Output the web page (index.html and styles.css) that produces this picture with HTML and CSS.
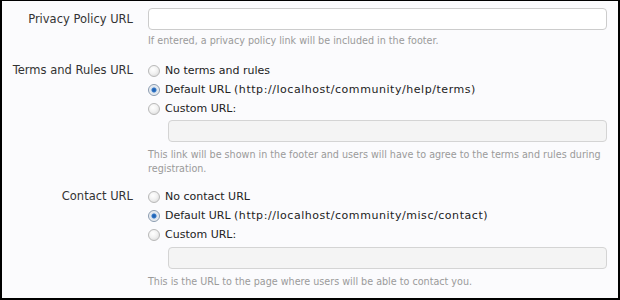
FILE: index.html
```html
<!DOCTYPE html>
<html>
<head>
<meta charset="utf-8">
<link rel="stylesheet" href="styles.css">
</head>
<body>
<div class="frame">
  <form class="options">
    <div class="row">
      <label class="label label-input">Privacy Policy URL</label>
      <div class="field">
        <input class="text" type="text">
        <p class="hint hint-first">If entered, a privacy policy link will be included in the footer.</p>
      </div>
    </div>
    <div class="row row-terms">
      <label class="label">Terms and Rules URL</label>
      <div class="field">
        <label class="choice"><input type="radio" name="terms"><span>No terms and rules</span></label>
        <label class="choice"><input type="radio" name="terms" checked><span>Default URL <span class="url">(http://localhost/community/help/terms)</span></span></label>
        <label class="choice"><input type="radio" name="terms"><span>Custom URL:</span></label>
        <div class="indent"><input class="text disabled" type="text" disabled></div>
        <p class="hint">This link will be shown in the footer and users will have to agree to the terms and rules during registration.</p>
      </div>
    </div>
    <div class="row row-contact">
      <label class="label">Contact URL</label>
      <div class="field">
        <label class="choice"><input type="radio" name="contact"><span>No contact URL</span></label>
        <label class="choice"><input type="radio" name="contact" checked><span>Default URL <span class="url">(http://localhost/community/misc/contact)</span></span></label>
        <label class="choice"><input type="radio" name="contact"><span>Custom URL:</span></label>
        <div class="indent indent-last"><input class="text disabled" type="text" disabled></div>
        <p class="hint">This is the URL to the page where users will be able to contact you.</p>
      </div>
    </div>
  </form>
</div>
</body>
</html>
```

FILE: styles.css
```css
html, body {
  margin: 0;
  padding: 0;
}
body {
  width: 620px;
  height: 300px;
  overflow: hidden;
  font-family: "DejaVu Sans", Verdana, sans-serif;
  font-size: 11px;
  color: #222;
}
.frame {
  box-sizing: border-box;
  width: 620px;
  height: 300px;
  border-style: solid;
  border-color: #000;
  border-width: 1px 2px 2px 2px;
  background: #fbfbfd;
  padding: 7px 11px 0 0;
}
.options {
  display: flex;
  flex-direction: column;
}
.row {
  display: grid;
  grid-template-columns: 131px 1fr;
  column-gap: 15px;
}
.row-terms {
  margin-top: 14px;
}
.row-contact {
  margin-top: 11px;
}
.label {
  text-align: right;
  color: #333;
  font-size: 11.5px;
  line-height: 19px;
}
.label-input {
  line-height: 22px;
}
.field {
  display: flex;
  flex-direction: column;
  min-width: 0;
}
.text {
  box-sizing: border-box;
  display: block;
  width: 100%;
  height: 22px;
  margin: 0;
  border: 1px solid #ccc;
  border-radius: 4px;
  background: #fff;
  font: inherit;
}
.text.disabled {
  background: #f4f4f4;
  border-color: #d4d4d4;
}
.choice {
  display: flex;
  align-items: center;
  height: 19px;
  white-space: nowrap;
}
.url {
  letter-spacing: 0.55px;
}
.choice input {
  -webkit-appearance: none;
  appearance: none;
  box-sizing: border-box;
  width: 12px;
  height: 12px;
  margin: 0 5px 0 0;
  border-radius: 50%;
  border: 1px solid #b8b8b8;
  background: radial-gradient(circle at 40% 35%, #ffffff 0%, #f2f2f2 45%, #d6d6d6 100%);
  flex: none;
}
.choice input:checked {
  border-color: #8a9bb0;
  background: radial-gradient(circle at 50% 50%, #1d5aa8 0%, #2f74c6 28%, #d8e2ee 42%, #f0f0f0 70%, #cfd6de 100%);
}
.indent {
  padding-left: 20px;
  margin-top: 2px;
}
.indent-last {
  margin-top: 3px;
}
.hint {
  margin: 6px 0 0 0;
  font-size: 9.6px;
  line-height: 14px;
  color: #9a9a9a;
}
.hint-first {
  margin-top: 4px;
  line-height: 13px;
}
```
